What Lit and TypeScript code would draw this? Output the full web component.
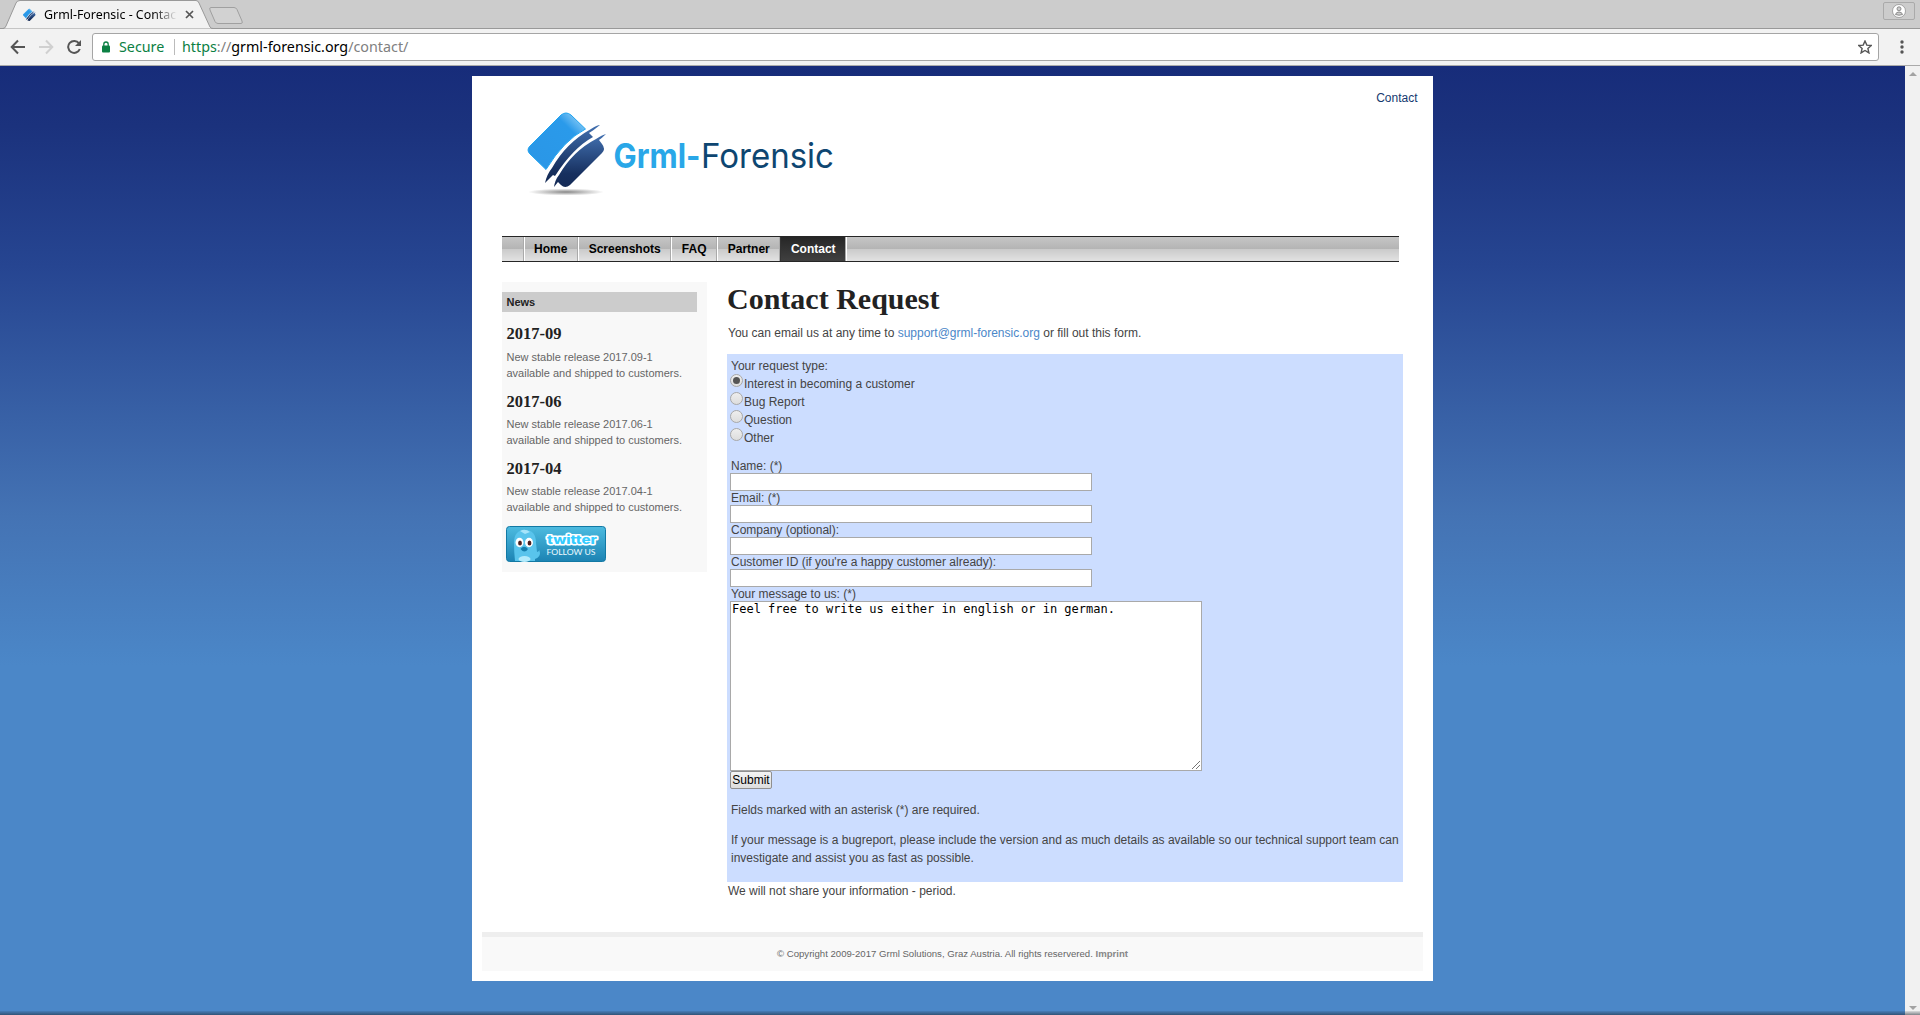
import { LitElement, html, css, svg } from "lit";
import { customElement } from "lit/decorators.js";

const logoShapes = svg`
  <defs>
    <linearGradient id="lite" x1="0" y1="1" x2="1" y2="0"><stop offset="0" stop-color="#2a96e6"/><stop offset=".72" stop-color="#2a9aea"/><stop offset="1" stop-color="#b5e2fb"/></linearGradient>
    <linearGradient id="dark" x1="0" y1="0" x2="0" y2="1"><stop offset="0" stop-color="#4270b0"/><stop offset=".75" stop-color="#17305f"/><stop offset="1" stop-color="#142a55"/></linearGradient>
  </defs>
  <path d="M2 34 L33 3 Q38 -1 43 3 L57.500 17 Q36 28 18 57.500 L2 42 Q-2 38 2 34Z" fill="url(#lite)" stroke="#20a4f0" stroke-width="1"/>
  <path d="M72 13 Q66 18 61 21 L65 25 Q45 36 27 64 L25 63 L17 71 Q19 62 24 56 Q38 31 63 17 Q69 13 72 13Z" fill="url(#dark)"/>
  <path d="M78 22 Q74 26 71 28 L74 32 Q78 37 74 41 L42 73 Q37 77 33 73 L30 70 L26 75 Q27 68 31 63 Q45 39 68 27 Q74 23 78 22Z" fill="url(#dark)"/>`;

@customElement("app-root")
export class AppRoot extends LitElement {
  static styles = css`
    :host { display: flex; flex-direction: column; width: 1920px; height: 1015px; overflow: hidden; font: 12px/18px "Liberation Sans", Arial, sans-serif; color: #444; }
    * { box-sizing: border-box; }
    svg { display: block; flex: none; }
    a { text-decoration: none; }
    p, h1, h2, h3 { margin: 0; }
    .tabs { height: 29px; flex: none; background: #ccc; position: relative; font: 12.4px/16px "Noto Sans", sans-serif; color: #000; box-shadow: inset 0 -1px #999; }
    .tab-shape { position: absolute; left: 0; top: 0; }
    .tab { position: relative; display: flex; align-items: center; height: 29px; padding: 0 0 0 23px; }
    .tab-title { width: 133px; margin-left: 8px; overflow: hidden; white-space: nowrap; -webkit-mask-image: linear-gradient(90deg, #000 82%, transparent); mask-image: linear-gradient(90deg, #000 82%, transparent); }
    .close { margin-left: 8px; }
    .user { position: absolute; left: 1883px; top: 2px; width: 32px; height: 18px; border: 1px solid #aaa; border-radius: 2px; display: flex; justify-content: center; align-items: center; }
    .toolbar { height: 37px; flex: none; display: flex; align-items: center; background: #f2f2f2; border-bottom: 1px solid #aaa; padding: 0 0 0 10px; }
    .nav-icon { margin-right: 12px; }
    .nav-icon.reload { margin: 0 11px 0 1px; }
    .omni { display: flex; align-items: center; width: 1787px; height: 28px; border: 1px solid #a5a5a5; border-radius: 3px; background: #fff; font: 14.300px/20px "Noto Sans", sans-serif; padding: 0 6px 0 9px; color: #808080; white-space: nowrap; }
    .secure { color: #0b8043; margin-left: 9px; width: 45px; }
    .bar { width: 1px; height: 16px; background: #bbb; margin: 0 7px 0 10px; }
    .url { flex: 1; }
    .green { color: #0b8043; }
    .host { color: #000; }
    .menu { margin-left: 21px; }
    .view { flex: 1; display: flex; min-height: 0; position: relative; }
    .view::after { content: ""; position: absolute; left: 0; right: 0; bottom: 0; height: 4px; background: linear-gradient(rgba(30,40,50,.1), rgba(30,40,50,.55)); }
    .canvas { width: 1905px; padding: 10px 0 0 472px; background: linear-gradient(180deg, #172c7a 0, #1b327d 60px, #264591 200px, #4473b4 450px, #4b87c8 600px, #4b87c8 100%); }
    .scroll { width: 15px; background: #f1f1f1; display: flex; flex-direction: column; justify-content: space-between; align-items: center; padding: 6px 0 5px; }
    .page { width: 961px; height: 905px; background: #fff; padding: 0 10px 10px; display: flex; flex-direction: column; }
    .head { height: 160px; display: flex; justify-content: space-between; padding: 13px 5.500px 0 44px; }
    .toplink { color: #15396f; }
    .logo { margin-top: 17px; }
    .logo-text { font-family: Inter, sans-serif; font-size: 34px; }
    .grml { font-weight: 700; fill: #29a7e8; }
    .forensic { font-weight: 400; fill: #0e4671; }
    .nav { width: 897px; height: 26px; flex: none; margin-left: 20px; border: solid #262626; border-width: 1px 0; background: linear-gradient(#c6c6c6, #b4b4b4 50%, #cacaca 50%, #e2e2e2); padding-left: 20.500px; display: flex; }
    .items { display: flex; border-left: 1px solid #aaa; border-right: 1px solid #fff; }
    .item { border-left: 1px solid #fff; border-right: 1px solid #aaa; padding: 0 9.600px; font-weight: 700; line-height: 24px; color: #000; }
    .item.active { background: linear-gradient(#262626, #404040); color: #fff; border-left-color: #333; }
    .main { flex: 1; display: flex; padding: 20px 0 0 20px; align-items: flex-start; }
    .side { width: 205px; height: 290px; background: #f8f8f8; padding: 10px 10px 0 0; font-size: 11px; line-height: 16px; color: #666; }
    .side-title { height: 20px; background: #ccc; font-size: 11px; line-height: 20px; padding-left: 4.500px; color: #222; }
    .news { height: 67px; padding: 12px 0 0 4.500px; white-space: nowrap; }
    .news:nth-of-type(1) { height: 68px; }
    .news-title { font: 700 16.500px/20px "Liberation Serif", serif; color: #222; margin-bottom: 5px; }
    .news:nth-of-type(n+2) .news-title { margin-bottom: 4px; }
    .twitter { margin: 12px 0 0 4px; }
    .content { width: 676px; margin-left: 20px; }
    .title { font: 700 30px/34px "Liberation Serif", serif; color: #222; padding-bottom: 2px; white-space: nowrap; }
    .intro { padding: 6px 0 12px 1px; }
    .mail { color: #4b87c8; }
    .form { height: 528px; background: #cdf; padding: 3px 3px 0; }
    .radio { display: flex; height: 18px; }
    .dot { width: 13px; height: 13px; margin: -1px 1.500px 0 -.5px; border: 1px solid #a8a8a8; border-radius: 50%; background: linear-gradient(#eee, #ddd); display: flex; align-items: center; justify-content: center; }
    .dot.on::after { content: ""; width: 7px; height: 7px; border-radius: 50%; background: #555; }
    .fields { padding-top: 12px; }
    .label { height: 14px; line-height: 14px; padding-left: 1px; }
    .field { width: 362px; height: 18px; border: 1px solid #a9a9a9; background: #fff; }
    .area { width: 472px; height: 170px; border: 1px solid #a9a9a9; background: #fff; color: #000; font: 12px/14px "DejaVu Sans Mono", monospace; padding: 0 1px 1px; display: flex; justify-content: space-between; }
    .grip { align-self: flex-end; }
    .submit { width: 42px; height: 18px; border: 1px solid #8f8f8f; border-radius: 2px; background: linear-gradient(#f4f4f4, #ddd); font: 12px/15px "Liberation Sans", sans-serif; color: #000; padding: 0; display: block; }
    .note { padding: 12px 0 0 1px; white-space: nowrap; }
    .after { padding-left: 1px; }
    .foot { height: 39px; flex: none; border-top: 5px solid #eee; background: #f9f9f9; text-align: center; font-size: 9.600px; line-height: 33px; color: #666; }
    .imprint { font-weight: 700; color: #888; }
  `;

  render() {
    return html`
      <div class="tabs">
        <svg class="tab-shape" width="260" height="29"><path d="M-1 28.500H3Q5 28.500 6 26L16 3Q17 .5 20 .5H196Q198 .5 199 3L210 27Q211 28.500 213 28.500" fill="#f2f2f2" stroke="#999"/><path d="M0 28.500H4M212 28.500H260" stroke="#999"/><path d="M211 7.500H234Q236 7.500 237 9.500L242 21Q243 23.500 241 23.500H218Q216 23.500 215 21.500L210 10Q209 7.500 211 7.500Z" fill="#d2d2d2" stroke="#a0a0a0"/></svg>
        <div class="tab">
          <svg width="13" height="14" viewBox="0 0 79 77">${logoShapes}</svg>
          <span class="tab-title">Grml-Forensic - Contact</span>
          <svg class="close" width="9" height="9"><path d="M1 1L8 8M8 1L1 8" stroke="#555" stroke-width="1.700"/></svg>
        </div>
        <div class="user"><svg width="14" height="14"><circle cx="7" cy="7" r="6.500" fill="#fff" stroke="#888" stroke-width=".7"/><circle cx="7" cy="4.800" r="2" fill="#ccc" stroke="#777" stroke-width=".8"/><path d="M3.500 10.500Q4 8 7 8T10.500 10.500Q7 12 3.500 10.500Z" fill="#ccc" stroke="#777" stroke-width=".8"/></svg></div>
      </div>
      <div class="toolbar">
        <svg class="nav-icon" width="16" height="16"><path d="M15 8H2M8 1.500L1.700 8L8 14.500" fill="none" stroke="#555" stroke-width="2"/></svg>
        <svg class="nav-icon" width="16" height="16"><path d="M1 8H14M8 1.500L14.300 8L8 14.500" fill="none" stroke="#d0d0d0" stroke-width="2"/></svg>
        <svg class="nav-icon reload" width="14" height="16"><path d="M12 4.300A6 6 0 1 0 12.800 10" fill="none" stroke="#555" stroke-width="2"/><path d="M14 1V7H8Z" fill="#555"/></svg>
        <div class="omni">
          <svg width="8" height="12"><rect y="4.500" width="8" height="7" rx="1" fill="#0b8043"/><path d="M1.800 5V3.200A2.200 2.200 0 0 1 6.200 3.200V5" fill="none" stroke="#0b8043" stroke-width="1.300"/></svg>
          <span class="secure">Secure</span><span class="bar"></span>
          <span class="url"><span class="green">https</span>://<span class="host">grml-forensic.org</span>/contact/</span>
          <svg width="14" height="14"><path d="M7 1L8.800 5.100L13.300 5.500L9.900 8.500L10.900 12.900L7 10.500L3.100 12.900L4.100 8.500L.7 5.500L5.200 5.100Z" fill="none" stroke="#555" stroke-width="1.400"/></svg>
        </div>
        <svg class="menu" width="4" height="14"><circle cx="2" cy="2" r="1.700" fill="#555"/><circle cx="2" cy="7" r="1.700" fill="#555"/><circle cx="2" cy="12" r="1.700" fill="#555"/></svg>
      </div>
      <div class="view">
        <div class="canvas"><div class="page">
          <div class="head">
            <svg class="logo" width="320" height="100" viewBox="0 0 320 100">
              <defs><radialGradient id="shade"><stop offset="0" stop-color="#888"/><stop offset="1" stop-color="#fff"/></radialGradient></defs>
              <ellipse cx="40" cy="86" rx="38" ry="3.500" fill="url(#shade)"/>
              <g transform="translate(2 6)">${logoShapes}</g>
              <text class="logo-text grml" x="87.500" y="62" textLength="87" lengthAdjust="spacingAndGlyphs">Grml-</text>
              <text class="logo-text forensic" x="175" y="62" textLength="133" lengthAdjust="spacingAndGlyphs">Forensic</text>
            </svg>
            <a class="toplink">Contact</a>
          </div>
          <div class="nav"><div class="items">
            ${["Home", "Screenshots", "FAQ", "Partner", "Contact"].map(t => html`<a class="item ${t === "Contact" ? "active" : ""}">${t}</a>`)}
          </div></div>
          <div class="main">
            <div class="side">
              <h2 class="side-title">News</h2>
              ${["09", "06", "04"].map(m => html`<div class="news"><h3 class="news-title">2017-${m}</h3><p>New stable release 2017.${m}-1<br>available and shipped to customers.</p></div>`)}
              <svg class="twitter" width="100" height="36">
                <defs><linearGradient id="tw" x1="0" y1="0" x2="0" y2="1"><stop offset="0" stop-color="#4dbbe0"/><stop offset="1" stop-color="#1c83b3"/></linearGradient></defs>
                <rect x=".5" y=".5" width="99" height="35" rx="3" fill="url(#tw)" stroke="#1279a4"/>
                <path d="M9 35Q8 26 8 17Q8 4 19 4Q30 4 30 17L31 26Q34 25 33 23L34 27Q34 31 29 33L29 35Z" fill="#59c4ec"/>
                <path d="M14 5Q19 2 24 6L19 8Z" fill="#a5e4fa"/>
                <ellipse cx="18.500" cy="33" rx="6" ry="3" fill="#b2ebfc"/>
                <ellipse cx="13.500" cy="16.500" rx="4" ry="4.700" fill="#fff"/><ellipse cx="23" cy="16.500" rx="4" ry="4.700" fill="#fff"/>
                <ellipse cx="14" cy="17" rx="1.900" ry="2.500" fill="#4b2020"/><ellipse cx="23.500" cy="17" rx="1.900" ry="2.500" fill="#4b2020"/>
                <path d="M14.500 23Q18 18.500 22 23Q18.500 28 14.500 23Z" fill="#147fad"/>
                <text x="41" y="17.500" font-family="Inter, sans-serif" font-weight="800" font-size="12.500" textLength="50" lengthAdjust="spacingAndGlyphs" fill="#35ccff" stroke="#fff" stroke-width="3" paint-order="stroke" stroke-linejoin="round">twitter</text>
                <text x="40.500" y="29" font-family="Lato, sans-serif" font-size="8" font-weight="400" textLength="49" lengthAdjust="spacingAndGlyphs" fill="#f0faff">FOLLOW US</text>
              </svg>
            </div>
            <div class="content">
              <h1 class="title">Contact Request</h1>
              <p class="intro">You can email us at any time to <a class="mail">support@grml-forensic.org</a> or fill out this form.</p>
              <div class="form">
                <p class="after">Your request type:</p>
                ${["Interest in becoming a customer", "Bug Report", "Question", "Other"].map((t, i) => html`<div class="radio"><span class="dot ${i ? "" : "on"}"></span><span>${t}</span></div>`)}
                <div class="fields">
                  ${["Name: (*)", "Email: (*)", "Company (optional):", "Customer ID (if you're a happy customer already):"].map(t => html`<div class="label">${t}</div><div class="field"></div>`)}
                  <div class="label">Your message to us: (*)</div>
                  <div class="area"><span>Feel free to write us either in english or in german.</span><svg class="grip" width="8" height="8"><path d="M0 8L8 0M4 8L8 4" stroke="#666" stroke-width=".9"/></svg></div>
                  <button class="submit">Submit</button>
                </div>
                <p class="note">Fields marked with an asterisk (*) are required.</p>
                <p class="note">If your message is a bugreport, please include the version and as much details as available so our technical support team can<br>investigate and assist you as fast as possible.</p>
              </div>
              <p class="after">We will not share your information - period.</p>
            </div>
          </div>
          <div class="foot">© Copyright 2009-2017 Grml Solutions, Graz Austria. All rights reservered. <a class="imprint">Imprint</a></div>
        </div></div>
        <div class="scroll"><svg width="8" height="4"><path d="M0 4L4 0L8 4Z" fill="#a3a3a3"/></svg><svg width="8" height="4"><path d="M0 0L4 4L8 0Z" fill="#a3a3a3"/></svg></div>
      </div>`;
  }
}
